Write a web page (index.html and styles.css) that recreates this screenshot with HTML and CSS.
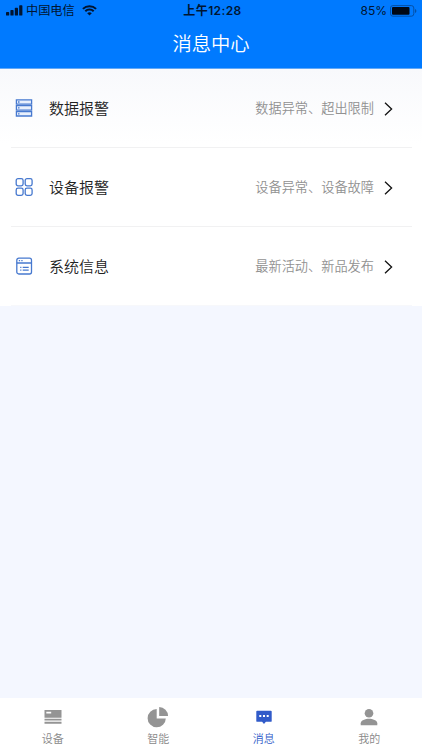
FILE: index.html
```html
<!DOCTYPE html>
<html lang="zh-CN">
<head>
  <meta charset="UTF-8" />
  <meta name="viewport" content="width=device-width, initial-scale=1.0"/>
  <title>消息中心</title>
  <link rel="stylesheet" href="styles.css">
</head>
<body>

  <header class="header">
    <div class="statusbar">
      <div class="carrier">
        <svg width="17" height="11" viewBox="0 0 17 11">
          <rect x="0" y="7" width="3.2" height="3.6" rx=".7"/>
          <rect x="4.4" y="5" width="3.2" height="5.6" rx=".7"/>
          <rect x="8.8" y="2.7" width="3.2" height="7.9" rx=".7"/>
          <rect x="13.2" y="0.3" width="3.2" height="10.3" rx=".7"/>
        </svg>
        <span>中国电信</span>
        <svg class="wifi" width="15" height="11" viewBox="0 0 15 11">
          <path d="M.9 3.9a9.4 9.4 0 0 1 13.2 0M3.3 6.3a6 6 0 0 1 8.4 0" fill="none" stroke="#001531" stroke-width="2"/>
          <path d="M5.2 8.3a3.4 3.4 0 0 1 4.6 0L7.5 10.6z"/>
        </svg>
      </div>
      <div class="time">上午12:28</div>
      <div class="battery">
        <span>85%</span>
        <svg width="27" height="12" viewBox="0 0 27 12">
          <rect x=".5" y=".6" width="23.3" height="10.6" rx="2.4" fill="none" stroke="#0450a5"/>
          <rect x="2" y="2.1" width="17.5" height="7.6" rx="1" fill="#000814"/>
          <path d="M25 4v4c1.9-.7 1.9-3.3 0-4z" fill="#0450a5"/>
        </svg>
      </div>
    </div>
    <h1>消息中心</h1>
  </header>

  <main class="list">
    <div class="row">
      <svg class="icon" viewBox="0 0 18 18">
        <path class="shelf" d="M1.4.8h15.200v4.400H1.400zM1.400 6.700h15.200v4.400H1.400zM1.400 12.600h15.200V17H1.400z"/>
        <path d="M3 3h1.500M3 8.900h1.500M3 14.800h1.500"/>
      </svg>
      <span class="name">数据报警</span>
      <span class="desc">数据异常、超出限制</span>
      <svg class="arrow" viewBox="0 0 9 14"><path d="M1 .8 7.600 7 1 13.200"/></svg>
    </div>
    <div class="row">
      <svg class="icon" viewBox="0 0 18 18">
        <rect x="1.200" y=".7" width="6.900" height="7.200" rx="1.800"/>
        <rect x="10.200" y=".7" width="6.900" height="7.200" rx="1.800"/>
        <rect x="1.200" y="10.100" width="6.900" height="7.200" rx="1.800"/>
        <rect x="10.200" y="10.100" width="6.900" height="7.200" rx="1.800"/>
      </svg>
      <span class="name">设备报警</span>
      <span class="desc">设备异常、设备故障</span>
      <svg class="arrow" viewBox="0 0 9 14"><path d="M1 .8 7.600 7 1 13.200"/></svg>
    </div>
    <div class="row">
      <svg class="icon" viewBox="0 0 18 18">
        <rect x="1.800" y="1.200" width="14.700" height="15.800" rx="2"/>
        <path d="M1.800 6h14.700M3.800 3.700h1.300M6.300 3.700h1.300M5.200 10.300h1.200M7.700 10.300h6M5.200 13.100h1.200M7.700 13.100h6"/>
      </svg>
      <span class="name">系统信息</span>
      <span class="desc">最新活动、新品发布</span>
      <svg class="arrow" viewBox="0 0 9 14"><path d="M1 .8 7.600 7 1 13.200"/></svg>
    </div>
  </main>

  <nav class="tabbar">
    <div class="tab">
      <svg width="22" height="22" viewBox="0 0 22 22">
        <path fill-rule="evenodd" d="M2.500 4h17v7.700h-17zM4.300 5.700v1.900h4.900V5.700z"/>
        <path d="M2.500 12.700h17v1.900h-17zM2.500 15.700h17v2h-17z"/>
      </svg>
      <span>设备</span>
    </div>
    <div class="tab">
      <svg width="22" height="22" viewBox="0 0 22 22">
        <path d="M9.700 3.100v9.300h9.100a9.100 9.100 0 1 1-9.100-9.300z"/>
        <path d="M12.200 1a9.200 9.200 0 0 1 8.900 9h-8.900z"/>
      </svg>
      <span>智能</span>
    </div>
    <div class="tab active">
      <svg width="22" height="22" viewBox="0 0 22 22">
        <path d="M4.200 4.700h13.600q.9 0 .9.900v9.300q0 .9-.9.900h-4.900L11 17.900l-1.900-2.100H4.200q-.9 0-.9-.9V5.600q0-.9.900-.9z"/>
        <path class="dots" d="M6.300 9.100h2v2h-2zM10 9.100h2v2h-2zM13.700 9.100h2v2h-2z"/>
      </svg>
      <span>消息</span>
    </div>
    <div class="tab">
      <svg width="22" height="22" viewBox="0 0 22 22">
        <circle cx="11" cy="7.200" r="4.300"/>
        <path d="M2.700 19.200v-1.900c0-2.900 4.700-4.500 8.300-4.500s8.300 1.600 8.300 4.500v1.900z"/>
      </svg>
      <span>我的</span>
    </div>
  </nav>

</body>
</html>
```
FILE: styles.css
```css
* {
  box-sizing: border-box;
  margin: 0;
  padding: 0;
}

body {
  display: flex;
  flex-direction: column;
  height: 100vh;
  font-family: 'Noto Sans CJK SC', sans-serif;
  font-weight: 350;
  background: #f4f7ff;
  overflow: hidden;
}

svg {
  display: block;
  flex-shrink: 0;
}

.header {
  height: 69px;
  background: #007aff;
  border-bottom: 1px solid #61a8f7;
}

.statusbar {
  display: grid;
  grid-template-columns: 1fr auto 1fr;
  align-items: center;
  height: 21px;
  padding: 0 5px 0 6px;
  font-size: 12.2px;
  line-height: 21px;
  color: #001531;
  fill: #001531;
}

.carrier,
.battery {
  display: flex;
  align-items: center;
}

.carrier {
  gap: 3px;
  font-weight: 400;
}

.wifi {
  margin-left: 4px;
}

.time {
  padding-left: 2px;
  font-family: Inter, 'Noto Sans CJK SC', sans-serif;
  font-size: 12px;
  font-weight: 600;
  letter-spacing: 0.4px;
}

.battery {
  justify-content: flex-end;
  gap: 3px;
  font-family: Inter, sans-serif;
  font-size: 12px;
  font-weight: 400;
}

.header h1 {
  font-size: 19.3px;
  font-weight: 350;
  line-height: 44px;
  text-align: center;
  color: #fff;
}

.list {
  background: linear-gradient(to bottom, #f8f9fc, #fff 75px);
}

.row {
  display: flex;
  align-items: center;
  height: 79px;
  margin: 0 10px 0 11px;
  padding: 0 19px 0 4px;
  border-bottom: 1px solid #f1f1f2;
}

.row:last-child {
  border-bottom-color: #f7f8fb;
}

.icon {
  width: 18px;
  height: 18px;
  fill: none;
  stroke: #4779cf;
  stroke-width: 1.3;
}

.shelf {
  fill: #e9f0fc;
}

.name {
  flex: 1;
  margin-left: 16px;
  padding-bottom: 2px;
  font-size: 15px;
  color: #222;
}

.desc {
  padding-bottom: 1px;
  font-size: 13.2px;
  color: #919191;
}

.arrow {
  width: 9px;
  height: 14px;
  margin: 1px 0 0 10px;
  fill: none;
  stroke: #111;
  stroke-width: 1.3;
}

.tabbar {
  display: flex;
  height: 52px;
  margin-top: auto;
  background: #fff;
}

.tab {
  flex: 1;
  display: flex;
  flex-direction: column;
  align-items: center;
  padding-top: 8px;
  font-size: 11px;
  line-height: 21px;
  color: #888;
  fill: #949494;
}

.tab.active {
  color: #315bc9;
  fill: #315bc9;
}

.tab .dots {
  fill: #fff;
}
```
